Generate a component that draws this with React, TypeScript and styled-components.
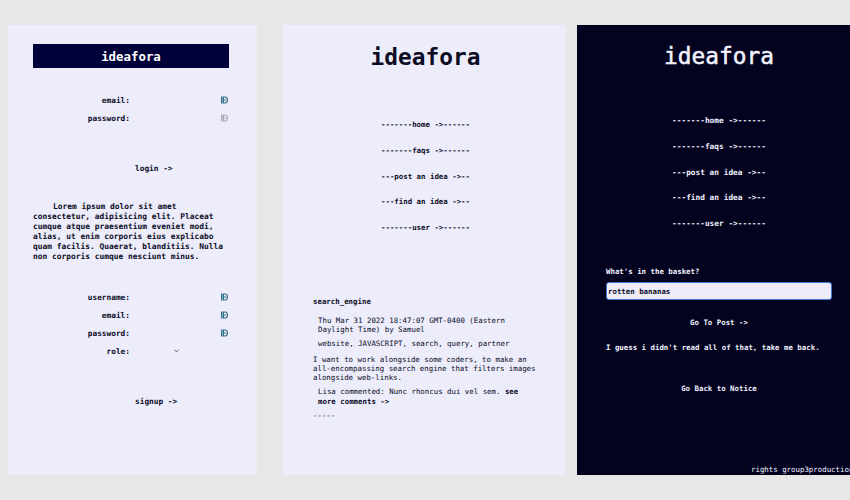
import React from "react";
import styled, { createGlobalStyle } from "styled-components";

const Global = createGlobalStyle`
  html, body { margin: 0; padding: 0; background: #e7e7e7; }
  body { font-family: "DejaVu Sans Mono", "Liberation Mono", monospace; }
  * { box-sizing: border-box; }
`;

const Stage = styled.div`
  width: 850px;
  height: 500px;
  overflow: hidden;
  display: flex;
  align-items: flex-start;
  padding: 25px 0 0 8px;
`;

const Panel = styled.section<{ $w: number; $dark?: boolean; $ml?: number; $pad: string }>`
  flex: none;
  width: ${(p) => p.$w}px;
  height: 450px;
  margin-left: ${(p) => p.$ml ?? 0}px;
  padding: ${(p) => p.$pad};
  background: ${(p) => (p.$dark ? "#03031f" : "#ececfb")};
  color: ${(p) => (p.$dark ? "#f2f2ff" : "#0b0b24")};
  display: flex;
  flex-direction: column;
`;

/* ---------- left panel ---------- */
const TitleBar = styled.div`
  height: 24px;
  background: #01013a;
  color: #ffffff;
  font-weight: bold;
  font-size: 12.4px;
  display: flex;
  align-items: center;
  justify-content: center;
`;

const FieldGrid = styled.div<{ $mt: number }>`
  margin-top: ${(p) => p.$mt}px;
  display: grid;
  grid-template-columns: 97px 95px;
  column-gap: 4px;
  grid-auto-rows: 18px;
  align-items: center;
  font-size: 7.8px;
  font-weight: bold;
`;

const Label = styled.span`
  text-align: right;
`;

const InputSlot = styled.span`
  height: 18px;
  display: flex;
  align-items: center;
  justify-content: flex-end;
  padding-right: 1px;
`;

const SelectSlot = styled.span`
  height: 18px;
  display: flex;
  align-items: center;
  padding-left: 40px;
`;

const FormButton = styled.div<{ $mt: number }>`
  margin-top: ${(p) => p.$mt}px;
  padding-left: 102px;
  font-size: 7.8px;
  font-weight: bold;
  line-height: 10px;
`;

const Lorem = styled.p`
  margin: 28px 0 0;
  font-size: 7.9px;
  font-weight: bold;
  line-height: 10px;
  text-indent: 20px;
`;

const AutofillIcon = ({ muted }: { muted?: boolean }) => {
  const c = muted ? "#a9a9b4" : "#2f6f86";
  return (
    <svg width="7" height="8" viewBox="0 0 7 8">
      <rect x="0" y="0.5" width="1.4" height="7" fill={c} />
      <path d="M2.4 1 H4.2 Q6.4 1 6.4 4 Q6.4 7 4.2 7 H2.4 Z" fill="none" stroke={c} strokeWidth="1.2" />
      <rect x="3.4" y="3.2" width="1.2" height="1.6" fill={c} />
    </svg>
  );
};

const Chevron = () => (
  <svg width="5" height="4" viewBox="0 0 5 4">
    <path d="M0.5 0.8 L2.5 2.8 L4.5 0.8" fill="none" stroke="#444" strokeWidth="0.9" />
  </svg>
);

/* ---------- middle / right ---------- */
const BigTitle = styled.h1<{ $heavy?: boolean }>`
  margin: 0;
  text-align: center;
  font-size: 22.8px;
  line-height: 28px;
  font-weight: ${(p) => (p.$heavy ? "bold" : "normal")};
  -webkit-text-stroke: ${(p) => (p.$heavy ? "0" : "0.5px currentColor")};
`;

const NavList = styled.nav<{ $mt: number; $fs: number }>`
  margin-top: ${(p) => p.$mt}px;
  display: flex;
  flex-direction: column;
  align-items: center;
  gap: 15.75px;
  font-size: ${(p) => p.$fs}px;
  font-weight: bold;
  line-height: 10px;
`;

const NavItem = styled.span`
  white-space: pre;
`;

const Post = styled.article`
  margin-top: 64px;
  font-size: 7.4px;
  line-height: 9.4px;
`;

const PostTitle = styled.div`
  font-weight: bold;
  line-height: 10px;
`;

const Meta = styled.div<{ $mt: number }>`
  margin-top: ${(p) => p.$mt}px;
  padding-left: 5px;
`;

const Body = styled.p`
  margin: 6px 0 0;
  line-height: 9px;
`;

const Strong = styled.b`
  font-weight: bold;
`;

const Dashes = styled.div`
  margin-top: 5px;
`;

const BasketLabel = styled.label`
  margin-top: 38px;
  font-size: 7.4px;
  font-weight: bold;
  line-height: 10px;
`;

const BasketInput = styled.div`
  margin-top: 5px;
  width: 226px;
  height: 18px;
  background: #ececfb;
  border: 1.5px solid #3f78d8;
  border-radius: 3px;
  color: #0b0b24;
  font-size: 7.4px;
  font-weight: bold;
  display: flex;
  align-items: center;
  padding-left: 1px;
`;

const CenterLine = styled.div<{ $mt: number }>`
  margin-top: ${(p) => p.$mt}px;
  text-align: center;
  font-size: 7.4px;
  font-weight: bold;
  line-height: 10px;
`;

const TextLine = styled.div<{ $mt: number }>`
  margin-top: ${(p) => p.$mt}px;
  font-size: 7.4px;
  font-weight: bold;
  line-height: 10px;
`;

const Footer = styled.div`
  margin-top: auto;
  padding-left: 145px;
  font-size: 7.4px;
  line-height: 10px;
  white-space: nowrap;
`;

const navItems = [
  "-------home ->------",
  "-------faqs ->------",
  "---post an idea ->--",
  "---find an idea ->--",
  "-------user ->------",
];

export default function App() {
  return (
    <>
      <Global />
      <Stage>
        <Panel $w={249} $pad="19px 28px 0 25px">
          <TitleBar>ideafora</TitleBar>
          <FieldGrid $mt={23}>
            <Label>email:</Label>
            <InputSlot><AutofillIcon /></InputSlot>
            <Label>password:</Label>
            <InputSlot><AutofillIcon muted /></InputSlot>
          </FieldGrid>
          <FormButton $mt={37}>login -&gt;</FormButton>
          <Lorem>
            Lorem ipsum dolor sit amet consectetur, adipisicing elit. Placeat cumque atque
            praesentium eveniet modi, alias, ut enim corporis eius explicabo quam facilis.
            Quaerat, blanditiis. Nulla non corporis cumque nesciunt minus.
          </Lorem>
          <FieldGrid $mt={26}>
            <Label>username:</Label>
            <InputSlot><AutofillIcon /></InputSlot>
            <Label>email:</Label>
            <InputSlot><AutofillIcon /></InputSlot>
            <Label>password:</Label>
            <InputSlot><AutofillIcon /></InputSlot>
            <Label>role:</Label>
            <SelectSlot><Chevron /></SelectSlot>
          </FieldGrid>
          <FormButton $mt={37}>signup -&gt;</FormButton>
        </Panel>

        <Panel $w={283} $ml={26} $pad="18px 28px 0 30px">
          <BigTitle $heavy>ideafora</BigTitle>
          <NavList $mt={49} $fs={7.4}>
            {navItems.map((n) => (
              <NavItem key={n}>{n}</NavItem>
            ))}
          </NavList>
          <Post>
            <PostTitle>search_engine</PostTitle>
            <Meta $mt={9}>Thu Mar 31 2022 18:47:07 GMT-0400 (Eastern Daylight Time) by Samuel</Meta>
            <Meta $mt={4.5}>website, JAVASCRIPT, search, query, partner</Meta>
            <Body>
              I want to work alongside some coders, to make an all-encompassing search engine
              that filters images alongside web-links.
            </Body>
            <Meta $mt={5.5}>
              Lisa commented: Nunc rhoncus dui vel sem. <Strong>see more comments -&gt;</Strong>
            </Meta>
            <Dashes>-----</Dashes>
          </Post>
        </Panel>

        <Panel $w={283} $ml={11} $dark $pad="17px 28px 0 29px">
          <BigTitle>ideafora</BigTitle>
          <NavList $mt={46} $fs={7.8}>
            {navItems.map((n) => (
              <NavItem key={n}>{n}</NavItem>
            ))}
          </NavList>
          <BasketLabel>What's in the basket?</BasketLabel>
          <BasketInput>rotten bananas</BasketInput>
          <CenterLine $mt={18}>Go To Post -&gt;</CenterLine>
          <TextLine $mt={15}>I guess i didn't read all of that, take me back.</TextLine>
          <CenterLine $mt={31}>Go Back to Notice</CenterLine>
          <Footer>rights group3productions</Footer>
        </Panel>
      </Stage>
    </>
  );
}
